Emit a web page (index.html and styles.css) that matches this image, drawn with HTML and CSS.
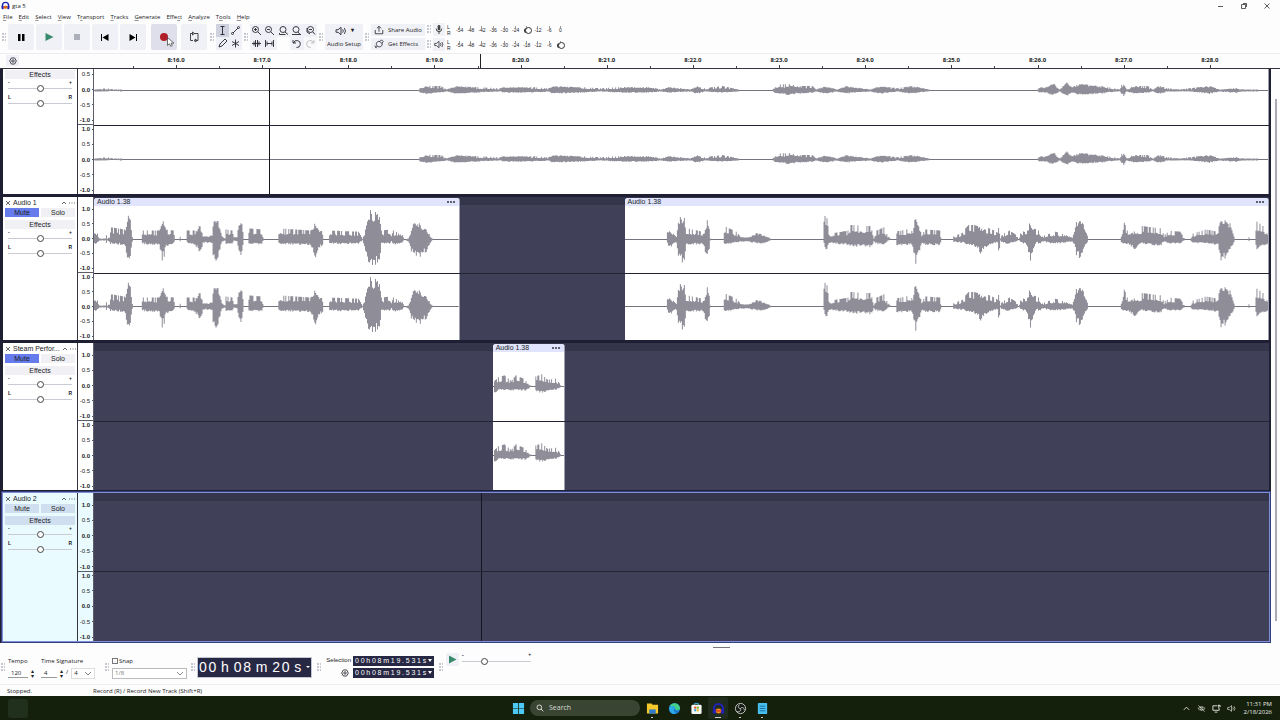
FILE: index.html
```html
<!DOCTYPE html>
<html lang="en">
<head>
<meta charset="utf-8">
<title>gta 5</title>
<link rel="stylesheet" href="styles.css">
</head>
<body>
<svg class="defs" aria-hidden="true">
  <symbol id="gear" viewBox="0 0 10 10"><path d="M3 1.200h4L9.200 5 7 8.800H3L.8 5z" fill="none" stroke="currentColor"/><circle cx="5" cy="5" r="1.500" fill="none" stroke="currentColor"/></symbol>
  <symbol id="mag" viewBox="0 0 12 12"><circle cx="5" cy="5" r="3.500" fill="none" stroke="currentColor" stroke-width="1.300"/><path d="M7.500 7.500L11 11" stroke="currentColor" stroke-width="1.400"/></symbol>
  <symbol id="speaker" viewBox="0 0 14 12"><path d="M1 4.500h2.500L7 1.500v9L3.500 7.500H1z" fill="none" stroke="currentColor"/><path d="M9 4q1.500 2 0 4M11 2.500q2.800 3.500 0 7" fill="none" stroke="currentColor"/></symbol>
  <symbol id="phones" viewBox="0 0 16 16"><path d="M2.500 11V8a5.500 5.500 0 0 1 11 0v3" fill="none" stroke="#2222b8" stroke-width="2.500"/><rect x="1" y="8.500" width="4" height="6" rx="1.500" fill="#2222b8"/><rect x="11" y="8.500" width="4" height="6" rx="1.500" fill="#2222b8"/><ellipse cx="8" cy="11" rx="3.400" ry="3" fill="#f28c1c"/><path d="M4.800 11h6.400" stroke="#d2331c" stroke-width="1.500"/></symbol>
</svg>

<header class="titlebar">
  <svg class="i9"><use href="#phones"/></svg><h1>gta 5</h1>
  <div class="winbtns">
    <button aria-label="Minimize"><svg viewBox="0 0 8 8"><path d="M1 4.500h5"/></svg></button>
    <button aria-label="Maximize"><svg viewBox="0 0 8 8"><path d="M1.500 2.500h4v4h-4zM3 1.500h3.500V5"/></svg></button>
    <button aria-label="Close"><svg viewBox="0 0 8 8"><path d="M1.500 1.500l5 5M6.500 1.500l-5 5"/></svg></button>
  </div>
</header>
<nav class="menu">
  <button><u>F</u>ile</button><button><u>E</u>dit</button><button><u>S</u>elect</button><button><u>V</u>iew</button><button>T<u>r</u>ansport</button><button><u>T</u>racks</button><button><u>G</u>enerate</button><button>Effe<u>c</u>t</button><button><u>A</u>nalyze</button><button>T<u>o</u>ols</button><button><u>H</u>elp</button>
</nav>

<section class="toolbar">
  <i class="grip"></i>
  <div class="transport">
    <button aria-label="Pause"><svg viewBox="0 0 26 26"><path d="M10 10h2.500v7H10zM14 10h2.500v7H14z"/></svg></button>
    <button aria-label="Play"><svg viewBox="0 0 26 26"><path d="M9.500 9v8l8-4z" fill="#388a6c"/></svg></button>
    <button aria-label="Stop"><svg viewBox="0 0 26 26"><path d="M10 10h6v6h-6z" fill="#adb0bb"/></svg></button>
    <button aria-label="Skip to start"><svg viewBox="0 0 26 26"><path d="M9 10h1v7H9zM16.500 10v7L10.500 13.500z"/></svg></button>
    <button aria-label="Skip to end"><svg viewBox="0 0 26 26"><path d="M16 10h1v7h-1zM9.500 10v7l6-3.500z"/></svg></button>
    <button aria-label="Record" class="record"><svg viewBox="0 0 26 26"><circle cx="13" cy="13" r="4" fill="#b01f27"/><path d="M16.500 13.500v8l2-1.800 1.200 2.600 1.600-.7-1.200-2.500h2.700z" fill="#fff" stroke="#333" stroke-width=".7"/></svg></button>
    <button aria-label="Loop"><svg viewBox="0 0 26 26"><path d="M11 9.500H9.500v7h2.500M14.500 16.500h2.500v-7h-4M11.500 8v3l2-1.500zM15 15v3l-2-1.500z" fill="none" stroke="#333" stroke-width=".9"/></svg></button>
  </div>
  <i class="grip"></i>
  <div class="tools">
    <button class="on" aria-label="Selection tool"><svg viewBox="0 0 13 13"><path d="M4.500 2.500h4M4.500 10.500h4M6.500 2.500v8"/></svg></button>
    <button aria-label="Envelope tool"><svg viewBox="0 0 13 13"><path d="M4 9l5-5" /><circle cx="3.500" cy="9.500" r="1"/><circle cx="9.500" cy="3.500" r="1"/></svg></button>
    <button aria-label="Draw tool"><svg viewBox="0 0 13 13"><path d="M3 10l1-3 5-5 2 2-5 5z"/></svg></button>
    <button aria-label="Multi-tool"><svg viewBox="0 0 13 13"><path d="M6.500 2.500v8M3 4.500l7 4M3 8.500l7-4"/></svg></button>
  </div>
  <i class="grip"></i>
  <div class="edit">
    <button aria-label="Zoom in"><svg viewBox="0 0 13 13"><circle cx="5.500" cy="5.500" r="3"/><path d="M8 8l3 3M4 5.500h3M5.500 4v3"/></svg></button>
    <button aria-label="Zoom out"><svg viewBox="0 0 13 13"><circle cx="5.500" cy="5.500" r="3"/><path d="M8 8l3 3M4 5.500h3"/></svg></button>
    <button aria-label="Fit selection"><svg viewBox="0 0 13 13"><circle cx="6" cy="5.500" r="3"/><path d="M8 8l3 2.500M2.500 10.500h6M2.500 9v1.500"/></svg></button>
    <button aria-label="Fit project"><svg viewBox="0 0 13 13"><circle cx="6" cy="5.500" r="3"/><path d="M8 8l2 2.500M2 10.500h9"/></svg></button>
    <button aria-label="Zoom toggle"><svg viewBox="0 0 13 13"><circle cx="6.500" cy="5.500" r="3"/><path d="M9 8l2 2.500M3 4v4l3 2M5 5.500h3"/></svg></button>
    <button aria-label="Trim"><svg viewBox="0 0 13 13"><path d="M2 6.500h9M4 4.500v4M5.500 3v7M7.500 3v7M9 4.500v4"/></svg></button>
    <button aria-label="Silence"><svg viewBox="0 0 13 13"><path d="M2.500 3v7M4 4.500v4M4 6.500h5M9 4.500v4M10.500 3v7"/></svg></button>
    <span></span>
    <button aria-label="Undo"><svg viewBox="0 0 13 13"><path d="M3 3v3h3M3.500 6a3.500 3.500 0 1 1 3 4.500"/></svg></button>
    <button aria-label="Redo" disabled><svg viewBox="0 0 13 13"><path d="M10 3v3H7M9.500 6a3.500 3.500 0 1 0-3 4.500"/></svg></button>
  </div>
  <i class="grip"></i>
  <button class="setup"><span><svg><use href="#speaker"/></svg><b>▾</b></span>Audio Setup</button>
  <i class="grip"></i>
  <div class="share">
    <button><svg viewBox="0 0 12 12"><path d="M1.500 6v4.500h9V6M6 8V1.500M3.500 4L6 1.500 8.500 4"/></svg><span>Share Audio</span></button>
    <button><svg viewBox="0 0 12 12"><path d="M2 10.500l2-2C1 6 4 2 7 3l2-2 2 2-1.500 2C11 8 7 11 4 8.500M7 3l2.500 2.500M1 8l2 3"/></svg><span>Get Effects</span></button>
  </div>
  <div class="meters" id="meters"></div>
</section>

<section class="ruler">
  <button aria-label="Timeline options"><svg><use href="#gear"/></svg></button>
  <div class="scale" id="scale"></div>
</section>

<main class="work">
  <div class="tracks" id="tracks"></div>
  <div class="vbar"><i></i></div>
</main>
<div class="hbar"><i></i></div>

<section class="bottom">
  <i class="grip"></i>
  <div class="tempo">
    <label for="tempo">Tempo</label><span class="num"><input id="tempo" value="120"><i>▴<br>▾</i></span>
  </div>
  <div class="sig">
    <label for="upper">Time Signature</label>
    <div><span class="num"><input id="upper" value="4"><i>▴<br>▾</i></span><span>/</span><select aria-label="Lower signature"><option>4</option></select></div>
  </div>
  <i class="grip"></i>
  <div class="snap">
    <label><input type="checkbox">Snap</label>
    <select aria-label="Snap to" disabled><option>1/8</option></select>
  </div>
  <i class="grip"></i>
  <div class="clock"><span>0</span><span>0</span><em>h</em><span>0</span><span>8</span><em>m</em><span>2</span><span>0</span><em>s</em><b></b></div>
  <i class="grip"></i>
  <div class="selection">
    <span>Selection</span><div class="digits" data-time="00h08m19.531s"></div>
    <button aria-label="Selection options"><svg><use href="#gear"/></svg></button><div class="digits" data-time="00h08m19.531s"></div>
  </div>
  <i class="grip"></i>
  <div class="speed">
    <button aria-label="Play at speed"><svg viewBox="0 0 13 13"><path d="M3 2.500v8L10.500 6.500z" fill="#388a6c"/></svg></button>
    <div class="slider"><span><b>-</b><b>+</b></span><input type="range" aria-label="Speed" value="31"></div>
  </div>
</section>
<footer class="status"><span>Stopped.</span><span>Record (R) / Record New Track (Shift+R)</span></footer>

<nav class="taskbar">
  <i class="widget"></i>
  <div class="apps">
    <button aria-label="Start"><svg viewBox="0 0 14 14"><path d="M1 1h5.600v5.600H1zM7.400 1H13v5.600H7.400zM1 7.400h5.600V13H1zM7.400 7.400H13V13H7.400z" fill="#4cc8f4"/></svg></button>
    <label class="search"><svg><use href="#mag"/></svg><input placeholder="Search" aria-label="Search"></label>
    <button class="run" aria-label="File Explorer"><svg viewBox="0 0 14 14"><path d="M1 1.500h5l1 1.500h6v9.500H1z" fill="#f7c829"/><path d="M3.500 8h7v4.500h-7z" fill="#2e7bcb"/></svg></button>
    <button aria-label="Edge"><svg viewBox="0 0 14 14"><circle cx="7" cy="7" r="6" fill="#1b78d0"/><path d="M1.500 5C3 0 12-.500 13 6.500c0 3-4.500 3-5 1.500C8 4 3.500 3.500 1.500 5z" fill="#43cf86"/><path d="M1.200 6C3 3 7.500 4 8 7c-2 0-3 3 1 5-4 2.500-8-1-7.800-6z" fill="#2caae8"/></svg></button>
    <button aria-label="Store"><svg viewBox="0 0 14 14"><path d="M5 3V1.500h4V3" fill="none" stroke="#45b7e8"/><rect x="1.500" y="3" width="11" height="10" rx="1.500" fill="#f4f6f4"/><path d="M4.500 5h2.200v2.200H4.500z" fill="#e8502a"/><path d="M7.300 5h2.200v2.200H7.300z" fill="#7bb518"/><path d="M4.500 7.800h2.200V10H4.500z" fill="#2b9fe6"/><path d="M7.300 7.800h2.200V10H7.300z" fill="#f4b81c"/></svg></button>
    <button class="run current" aria-label="Audacity"><svg><use href="#phones"/></svg></button>
    <button class="run" aria-label="OBS Studio"><svg viewBox="0 0 14 14"><circle cx="7" cy="7" r="5.500" fill="#181b18" stroke="#c8ccc6"/><path d="M7 7C4 7 4 3.500 6 3M7 7c2-2.500 4.500 0 4 2M7 7c1 3-2 4.500-4 3" fill="none" stroke="#c8ccc6"/></svg></button>
    <button class="run" aria-label="Notepad"><svg viewBox="0 0 14 14"><rect x="2" y="1" width="10" height="12" rx="1" fill="#47c0f0"/><path d="M4 4.500h6M4 7h6M4 9.500h6" stroke="#176a9c"/></svg></button>
  </div>
  <div class="tray">
    <svg viewBox="0 0 10 10"><path d="M2 6.500l3-3 3 3"/></svg>
    <svg viewBox="0 0 10 10"><path d="M1 5q4-4 8 0-4 4-8 0zM1.500 1.500l7 7" opacity=".7"/><circle cx="5" cy="5" r="1.500" opacity=".7"/></svg>
    <svg viewBox="0 0 10 10"><path d="M6 2H1v5h7V5M3 9h3M7.500 1v4M6.500 1.500H9v2"/></svg>
    <svg viewBox="0 0 14 12"><use href="#speaker"/></svg>
    <div class="time">11:31 PM<br>2/18/2026</div>
  </div>
</nav>
<script src="app.js"></script>
</body>
</html>
```

FILE: styles.css
```css
* { box-sizing: border-box; }
body { margin: 0; min-height: 100vh; display: flex; flex-direction: column; background: #fdfdfe; color: #1b1c24; font: 6px/8px "Open Sans", "Noto Sans", sans-serif; }
button, input, select { font: inherit; color: inherit; border: 0; padding: 0; margin: 0; background: none; }
svg { display: block; flex: none; }
.defs { width: 0; height: 0; position: absolute; }
.titlebar { height: 11px; display: flex; align-items: center; padding-left: 1px; gap: 2px; }
.titlebar h1 { font-size: 6px; font-weight: 400; margin: 0; }
.i9 { width: 9px; height: 9px; }
.winbtns { margin-left: auto; display: flex; gap: 15px; padding-right: 9px; }
.winbtns svg { width: 8px; height: 8px; fill: none; stroke: #333; stroke-width: .8; }
.menu { height: 11px; display: flex; gap: 6px; padding-left: 3px; align-items: center; }
.menu u { text-underline-offset: 1px; text-decoration-thickness: 1px; text-decoration-color: #999; }

.toolbar { height: 31px; display: flex; align-items: center; gap: 2px; padding: 0 2px 1px; }
.toolbar button { background: #f0f1f6; }
.grip { width: 4px; height: 9px; flex: none; background: radial-gradient(circle at 1px 1px, #b4b6c0 .6px, transparent 1px) 0 0 / 3px 3px; }
.transport { display: flex; gap: 2px; padding: 0 1px 0 0; }
.transport button { width: 26px; height: 26px; border-radius: 2px; }
.transport .record { margin-left: 3px; background: #dedfea; }
.transport button:last-child { margin-left: 2px; }
.transport svg { width: 26px; height: 26px; }
.tools { display: grid; grid-template-columns: 13px 13px; }
.tools svg, .edit svg { width: 13px; height: 13px; fill: none; stroke: #25262e; stroke-width: .9; }
.tools .on { background: #d0d2e0; }
.edit { display: grid; grid-template-columns: repeat(5, 1fr); width: 67px; }
.edit :disabled { opacity: .3; }
.toolbar .setup { width: 38px; height: 26px; display: flex; flex-direction: column; align-items: center; justify-content: space-between; padding: 2px 0; white-space: nowrap; }
.setup span { display: flex; gap: 4px; }
.setup svg { width: 12px; height: 10px; }
.share { display: grid; gap: 2px; }
.share button { width: 54px; height: 12px; display: flex; align-items: center; gap: 4px; padding-left: 3px; white-space: nowrap; }
.share svg { width: 10px; height: 10px; fill: none; stroke: #25262e; }
.meters { display: grid; gap: 2px; font: 5px/7px "Liberation Sans", Arial, sans-serif; }
.meter { display: flex; align-items: center; height: 13px; gap: 2px; }
.meter button { width: 12px; height: 13px; display: grid; place-items: center; }
.meter button svg { width: 10px; height: 9px; }
.meter .lr { line-height: 6px; width: 5px; }
.marks { display: grid; grid-template-columns: repeat(10, 1fr); width: 112px; text-align: center; position: relative; }
.marks span { padding-top: 1px; background: linear-gradient(#999, #999) center top / 1px 2px no-repeat; }
.knob { position: absolute; top: 1px; width: 7px; height: 7px; border: 1px solid #333; border-radius: 50%; background: #fff; box-shadow: -2px 0 0 -1px #333; }

.ruler { height: 16px; display: flex; border-top: 1px solid #ececf2; border-bottom: 1px solid #33343f; padding-right: 11px; }
.ruler button { width: 13px; height: 11px; margin: 1px 74px 0 6px; display: grid; place-items: center; background: #f0f1f6; }
.ruler svg { width: 8px; height: 8px; }
.scale { flex: 1; position: relative; font-weight: 700; }
.scale span { position: absolute; top: 2px; transform: translateX(-50%); }
.scale i { position: absolute; bottom: 0; width: 1px; height: 2px; background: #444; }
.scale i.major { height: 3px; }
.scale i.cursor { height: 14px; background: #222; }

.work { flex: 1; display: flex; min-height: 0; }
.vbar { width: 9px; padding: 30px 3px 22px; display: flex; justify-content: flex-end; }
.vbar i { width: 2px; background: #a9aab2; }
.hbar { height: 10px; display: flex; justify-content: center; align-items: center; padding: 0 0 1px 163px; }
.hbar i { width: 17px; height: 1px; background: #777; }
.tracks { flex: 1; min-width: 0; overflow: hidden; display: flex; flex-direction: column; justify-content: flex-end; gap: 3px; background: #1e1f33; padding: 0 2px 2px 3px; height: 574px; }
.track { display: flex; flex: none; background: #fff; font: 6px/8px "Liberation Sans", Arial, sans-serif; }
.panel { width: 75px; border-right: 1px solid #33343f; padding: 2px; display: flex; flex-direction: column; }
.head { display: flex; align-items: center; height: 8px; gap: 2px; padding: 0; font-size: 7px; }
.head h2 { margin: 0; font: inherit; flex: 1; white-space: nowrap; }
.head svg { width: 6px; height: 6px; fill: none; stroke: #555; stroke-width: .9; }
.pair { display: grid; grid-template-columns: 1fr 1fr; gap: 2px; margin: 1px 0 3px; }
.panel button { font-size: 7px; height: 9px; line-height: 9px; background: #f0f0f5; }
.panel .head button { background: none; height: 6px; }
.panel .muted { background: #677cec; }
.scrolled .panel { padding-top: 23px; }
.slider span { display: flex; justify-content: space-between; height: 5px; font-size: 5px; line-height: 5px; }
.panel .slider { padding: 1px 3px 0; margin-bottom: 2px; }
.slider input { appearance: none; display: block; width: 100%; height: 7px; background: linear-gradient(#c9cbd4, #c9cbd4) center / 100% 1px no-repeat; }
.slider input::-webkit-slider-thumb { appearance: none; width: 7px; height: 7px; border: 1px solid #444; border-radius: 50%; background: #fff; }
.axis { width: 16px; display: flex; flex-direction: column; padding-top: 8px; border-right: 1px solid #5c5d68; font-size: 6px; }
.axis div { flex: 1; display: flex; flex-direction: column; justify-content: space-between; text-align: right; padding-right: 2px; }
.axis div + div { border-top: 1px solid #5c5d68; }
.axis span { min-height: 8px; background: linear-gradient(#555, #555) right center / 1px 1px no-repeat; margin-right: -2px; padding-right: 3px; }
.axis span:nth-child(odd) { font-weight: 700; }
.lane { flex: 1; min-width: 0; position: relative; overflow: hidden; background: linear-gradient(#34354b 8px, #404058 8px); }
.lane::after { content: ""; position: absolute; left: 0; right: 0; top: calc(50% + 4px); height: 1px; background: #242534; }
.clip { position: absolute; top: 1px; bottom: 0; display: flex; flex-direction: column; background: #fff; border-radius: 3px 3px 0 0; border-right: 1px solid #9fa0ad; overflow: hidden; }
.clip header { flex: none; display: flex; justify-content: space-between; align-items: center; height: 8px; padding: 0 4px 0 3px; background: #e0e5fd; font-size: 7px; }
.clip header button { display: flex; gap: 1px; }
.clip header i { width: 2px; height: 2px; border-radius: 50%; background: #33343f; }
.wave { flex: 1; min-height: 0; width: 100%; }
.wave path { stroke: #8e8d98; fill: none; }
.wave line { stroke: #74747e; vector-effect: non-scaling-stroke; }
.cut, .playhead { position: absolute; top: 0; bottom: 0; width: 1px; background: #16161e; }
.selected { background: #e9fbfe; outline: 1px solid #7d8dd8; box-shadow: 0 0 0 2px #35407c; }
.selected .panel button { background: #d0dff0; }
.selected .panel .head button { background: none; }

.bottom { display: flex; align-items: center; gap: 3px; height: 31px; padding: 0 1px 2px; }
.num { display: flex; align-items: center; margin-top: 3px; }
.num input { width: 20px; height: 10px; border-bottom: 1px solid #999; padding-left: 3px; background: #fff; }
.num i { font: 6px/5px "DejaVu Sans", sans-serif; margin-left: 3px; }
.sig > div { display: flex; gap: 3px; align-items: center; }
.sig .num input { width: 16px; }
.bottom select { appearance: none; height: 11px; border: 1px solid #ddd; padding: 0 2px; background: linear-gradient(45deg, transparent 35%, #888 35%, #888 65%, transparent 65%) right 6px center / 3px 3px no-repeat, linear-gradient(-45deg, transparent 35%, #888 35%, #888 65%, transparent 65%) right 3px center / 3px 3px no-repeat, #fff; }
.sig select { width: 24px; margin-top: 3px; }
.tempo { width: 30px; }
.sig { width: 61px; }
.snap { width: 75px; margin-right: 1px; }
.snap label { display: flex; align-items: center; gap: 1px; }
.snap input { appearance: none; width: 6px; height: 6px; border: 1px solid #777; }
.snap select { width: 100%; margin-top: 3px; color: #777; border-color: #bbb; opacity: 1; }
.clock { display: flex; align-items: center; justify-content: space-between; width: 113px; height: 19px; margin-right: 3px; padding: 0 1px; background: #272844; color: #fff; font: 14px/19px "Liberation Sans", Arial, sans-serif; outline: 1px solid #c4c6d2; }
.clock em { font-style: normal; padding: 0 3px; }
.clock b { border: 2px solid transparent; border-top-color: #fff; }
.selection { display: grid; grid-template-columns: 27px 81px; gap: 2px; margin: 0 2px 2px 0; text-align: right; white-space: nowrap; font-family: "Liberation Sans", Arial, sans-serif; }
.selection button { justify-self: end; padding: 1px 2px 0 0; }
.selection svg { width: 8px; height: 8px; }
.digits { height: 10px; background: #272844; color: #fff; display: flex; justify-content: space-between; align-items: center; padding: 0 2px; font-size: 7px; line-height: 10px; }
.digits b { border: 2px solid transparent; border-top: 3px solid #fff; border-bottom: 0; }
.speed { display: flex; align-self: flex-start; gap: 3px; }
.speed button { width: 13px; height: 13px; background: #f0f1f6; }
.speed .slider { width: 69px; }
.status { height: 12px; display: flex; align-items: center; border-top: 1px solid #ececf2; padding-left: 7px; }
.status span:first-child { width: 86px; }

.taskbar { height: 24px; background: #14200c; color: #e8ebe4; display: grid; grid-template-columns: 1fr auto 1fr; align-items: center; padding: 0 8px; }
.widget { width: 20px; height: 19px; border-radius: 3px; background: #20301d; }
.apps { display: flex; align-items: center; gap: 2px; }
.apps button { width: 20px; height: 22px; display: grid; place-items: center; position: relative; border-radius: 2px; }
.apps svg { width: 13px; height: 13px; }
.run::after { content: ""; position: absolute; left: 9px; bottom: 1px; width: 2px; height: 1px; background: #ccc; }
.apps .current { background: #202c1d; }
.current::after { left: 7px; width: 6px; }
.search { display: flex; align-items: center; gap: 5px; width: 110px; height: 16px; border-radius: 8px; background: #3a4433; padding-left: 6px; }
.apps .search svg { width: 8px; height: 8px; }
.search input { width: 70px; font-size: 7px; }
.search input::placeholder { color: #d8dcd4; }
.tray { display: flex; align-items: center; justify-content: flex-end; gap: 6px; }
.tray svg { width: 9px; height: 9px; fill: none; stroke: #e8ebe4; }
.time { text-align: right; margin-left: 2px; }
```

FILE: app.js
```js
// Timeline units: 0 at the left edge of the lanes, SPAN at the right edge.
const ORIGIN = 93, SPAN = 1176;
const pct = x => ((x - ORIGIN) / SPAN * 100).toFixed(3) + '%';

// Envelope points: x, height above the axis, depth below it.
const voiceA = [93,12,5,98,1,1,104,1,1,105,7,3,106,1,1,108,2,2,109,11,4,123,9,5,124,8,8,126,19,16,127,25,22,129,18,15,131,3,3,132,0,0,140,0,0,141,8,4,158,8,5,159,10,12,161,19,18,163,14,15,165,9,6,172,8,4,174,0,0,178,0,0,179,4,2,180,0,0,185,0,0,186,8,3,194,8,5,196,8,8,198,16,15,200,10,10,202,3,3,207,3,3,211,4,4,212,16,14,213,19,18,217,19,19,219,12,10,221,3,2,224,1,1,225,9,4,231,8,5,233,2,1,236,2,2,238,18,14,241,16,15,243,0,0,247,0,0,248,10,4,261,9,4,263,0,0,277,0,0,278,10,4,310,8,5,312,9,9,315,17,18,318,10,9,322,8,5,323,0,0,328,0,0,329,8,4,358,7,4,362,1,1,364,5,6,366,18,15,369,23,22,371,29,27,372,22,25,376,26,22,380,20,17,381,8,4,390,9,4,391,3,2,393,8,5,402,4,3,404,0,0,408,1,2,410,6,8,412,15,13,418,15,17,426,10,11,430,3,3,433,0,0];
const voiceB = [624,0,0,665,0,0,667,13,6,670,11,6,673,5,4,675,3,3,677,17,15,679,20,19,683,20,21,685,5,4,686,10,5,701,7,4,703,6,8,706,17,17,708,10,10,709,1,1,712,0,0,722,0,0,723,12,4,735,7,3,740,2,2,748,2,2,756,6,4,766,3,3,771,0,0,822,0,0,823,16,4,825,26,12,827,12,5,829,5,3,835,6,4,847,8,5,849,13,6,870,12,7,873,1,2,876,8,4,883,11,5,886,5,2,890,0,0,895,0,0,896,7,5,910,10,5,912,8,9,915,22,21,918,12,12,921,4,4,925,9,5,939,8,5,941,0,0,952,0,0,953,3,2,962,6,3,965,10,4,968,13,5,974,13,6,980,11,12,986,11,7,994,8,3,997,6,3,998,13,14,1000,1,1,1001,4,3,1009,8,4,1016,4,2,1018,0,0,1021,8,3,1026,6,5,1030,17,18,1033,10,8,1036,9,3,1040,7,4,1042,3,2,1055,7,4,1072,2,2,1074,9,6,1076,15,14,1080,16,18,1083,14,10,1087,4,3,1088,0,0,1120,0,0,1121,3,3,1123,17,4,1126,11,4,1128,5,4,1134,7,9,1140,6,4,1142,12,4,1160,10,6,1164,4,2,1170,8,4,1180,7,4,1185,0,0,1190,0,0,1192,5,3,1206,9,4,1218,7,5,1220,19,18,1224,18,18,1230,15,10,1234,3,3,1235,0,0,1248,0,0,1249,2,2,1250,0,0,1255,0,0,1257,16,9,1269,8,4];
const steam = [492,0,0,493,5,8,496,8,4,503,10,3,510,5,4,515,10,3,525,6,4,529,2,1,531,0,0,534,0,0,535,9,4,541,11,6,547,6,4,555,7,3,560,2,1,561,0,0];
const quiet = [93,1,1,105,2,1,112,1,0,120,1,1,129,0,0,417,0,0,419,2,2,424,4,3,440,4,2,446,1,1,455,4,3,475,3,2,500,2,1,503,3,2,530,3,2,548,2,1,552,4,3,580,3,2,600,2,1,620,3,2,650,3,2,660,1,1,668,3,2,690,1,1,697,4,3,704,2,1,722,4,2,738,1,1,742,0,0,772,0,0,775,5,3,790,6,4,797,4,3,812,4,2,816,1,1,825,4,3,837,1,1,845,4,3,856,3,2,870,1,1,880,4,3,897,2,1,910,4,3,918,3,2,935,0,0,1037,0,0,1040,3,2,1047,3,2,1053,7,5,1060,1,1,1067,7,5,1072,3,2,1080,6,4,1100,4,3,1116,2,1,1120,1,1,1124,9,5,1127,2,1,1135,4,3,1148,4,2,1153,1,1,1160,4,3,1168,2,1,1180,1,1,1190,2,1,1210,4,3,1220,1,1,1235,2,2,1245,1,1,1258,1,1,1262,0,0];

function waveSvg(pts, from, to, half) {
  let d = '', k = 0, seed = from;
  for (let x = Math.max(from, pts[0]); x < to; x++) {
    while (k + 3 < pts.length && pts[k + 3] <= x) k += 3;
    if (k + 3 >= pts.length) break;
    const t = (x - pts[k]) / (pts[k + 3] - pts[k]);
    let up = pts[k + 1] + (pts[k + 4] - pts[k + 1]) * t;
    let down = pts[k + 2] + (pts[k + 5] - pts[k + 2]) * t;
    seed = (seed * 16807) % 2147483647;
    const r = seed / 2147483647;
    if (up < 1 && down < 1) continue;
    const comb = up > down * 1.5;
    up *= comb ? (r > .55 ? 1.1 : .5 + r * .3) : .75 + r * .4;
    down *= .7 + ((r * 7) % 1) * .45;
    d += `M${x - from + .5} ${(half - up).toFixed(1)}V${(half + down).toFixed(1)}`;
  }
  const w = to - from;
  return `<svg class="wave" viewBox="0 0 ${w} ${half * 2}" preserveAspectRatio="none"><line x2="${w}" y1="${half}" y2="${half}"/><path d="${d}"/></svg>`;
}

const clip = c => `<article class="clip" style="left:${pct(c.from)};width:${((c.to - c.from) / SPAN * 100).toFixed(3)}%">
  <header>${c.title ? `<span>${c.title}</span><button aria-label="Clip menu"><i></i><i></i><i></i></button>` : ''}</header>
  ${waveSvg(c.pts, c.from, c.to, c.half)}${waveSvg(c.pts, c.from, c.to, c.half)}</article>`;

const axis = top => `<div><span>${top}</span><span>0.5</span><span>0.0</span><span>-0.5</span><span>-1.0</span></div>`;
const slider = (a, b, name) => `<div class="slider"><span><b>${a}</b><b>${b}</b></span><input type="range" aria-label="${name}"></div>`;
const head = t => `<div class="head"><button aria-label="Close track"><svg viewBox="0 0 6 6"><path d="M1 1l4 4M5 1L1 5"/></svg></button><h2>${t.name}</h2>
      <button aria-label="Collapse"><svg viewBox="0 0 6 6"><path d="M1 4l2-2 2 2"/></svg></button><button aria-label="Track menu"><svg viewBox="0 0 6 6"><path d="M0 3h1M2.500 3h1M5 3h1"/></svg></button></div>
    <div class="pair"><button${t.muted ? ' class="muted"' : ''}>Mute</button><button>Solo</button></div>`;

// The first track is scrolled: its head lies above the visible area.
const tracks = [
  { state: 'scrolled', height: 147, clips: [{ from: 93, to: 1269, pts: quiet, half: 34 }], extra: `<i class="cut" style="left:${pct(268)}"></i>` },
  { name: 'Audio 1', height: 143, muted: true, clips: [{ title: 'Audio 1.38', from: 93, to: 459, pts: voiceA, half: 33 }, { title: 'Audio 1.38', from: 624, to: 1269, pts: voiceB, half: 33 }] },
  { name: 'Steam Perfor...', height: 147, muted: true, clips: [{ title: 'Audio 1.38', from: 492, to: 564, pts: steam, half: 34 }] },
  { name: 'Audio 2', state: 'selected', height: 148, clips: [], extra: `<i class="playhead" style="left:${pct(480)}"></i>` }
];

document.getElementById('tracks').innerHTML = tracks.map(t => `
<section class="track ${t.state || ''}" style="height:${t.height}px">
  <div class="panel">
    ${t.name ? head(t) : ''}
    <button>Effects</button>
    ${slider('-', '+', 'Volume')}${slider('L', 'R', 'Pan')}
  </div>
  <div class="axis">${axis(t.name ? '1.0' : '')}${axis('1.0')}</div>
  <div class="lane">${t.clips.map(clip).join('')}${t.extra || ''}</div>
</section>`).join('');

let marks = `<i class="cursor" style="left:${pct(480)}"></i>`;
for (let n = 0; n < 13; n++) {
  const x = 176 + n * 86.15;
  marks += `<span style="left:${pct(x)}">8:${16 + n}.0</span><i class="major" style="left:${pct(x)}"></i><i style="left:${pct(x - 43)}"></i>`;
}
document.getElementById('scale').innerHTML = marks;

const levels = [-54, -48, -42, -36, -30, -24, -18, -12, -6, 0];
const mic = '<svg viewBox="0 0 10 10"><rect x="3.500" y="0" width="3" height="6" rx="1.500" fill="#444"/><path d="M2 4q0 3.500 3 3.500T8 4M5 7.500V10" fill="none" stroke="#333"/></svg>';
const spk = '<svg><use href="#speaker"/></svg>';
document.getElementById('meters').innerHTML = [[mic, 'Record', 6], [spk, 'Playback', 9]].map(([icon, name, at]) =>
  `<div class="meter"><i class="grip"></i><button aria-label="${name} meter">${icon}</button><div class="lr">L<br>R</div>
   <div class="marks">${levels.map((v, i) => `<span>${i === at ? '' : v}</span>`).join('')}<i class="knob" style="left:${at * 10 + 3}%"></i></div></div>`).join('');

document.querySelectorAll('.digits').forEach(el => {
  el.innerHTML = [...el.dataset.time].map(c => `<span>${c}</span>`).join('') + '<b></b>';
});
```
